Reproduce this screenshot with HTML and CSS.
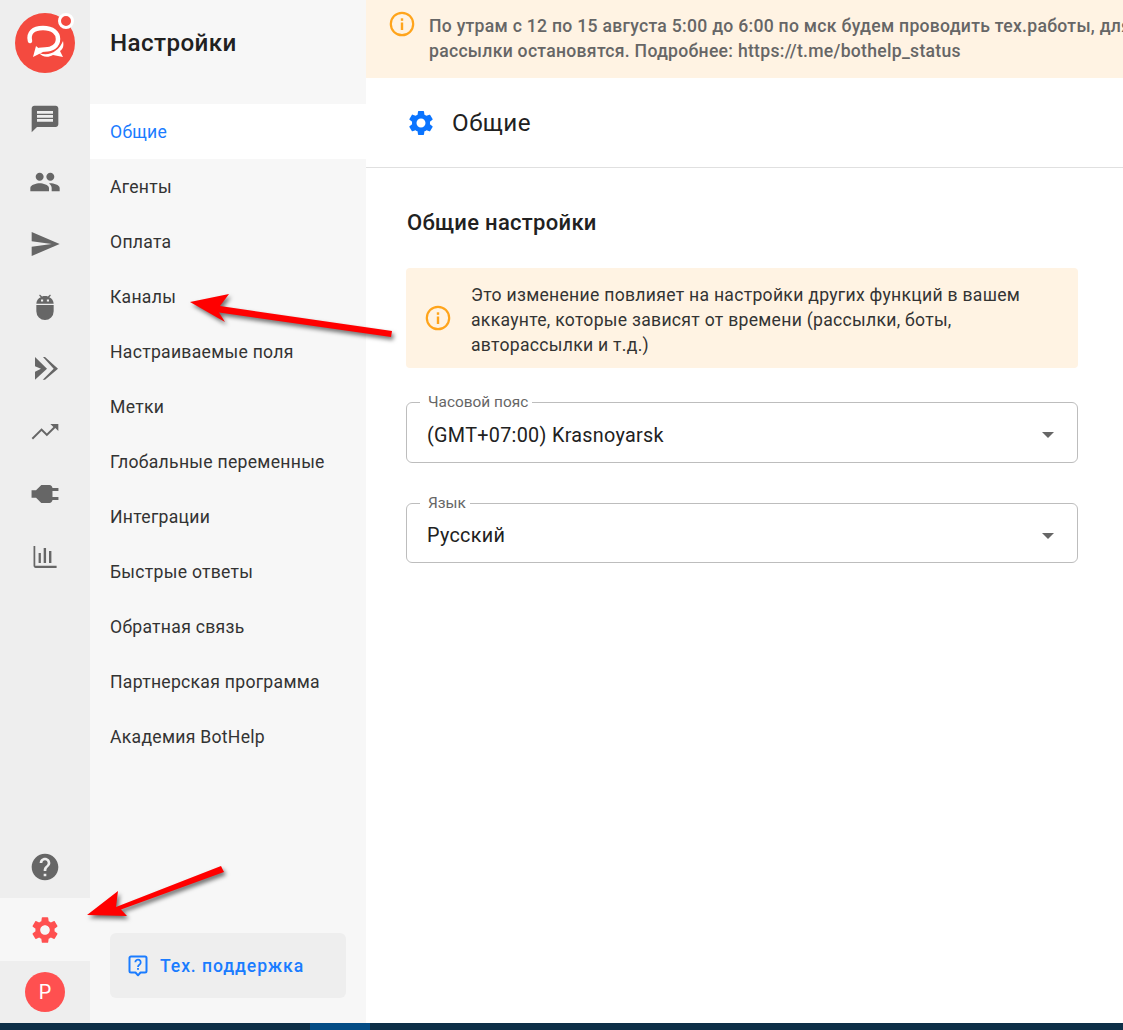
FILE: index.html
```html
<!DOCTYPE html>
<html lang="ru">
<head>
<meta charset="utf-8">
<title>Настройки</title>
<link rel="stylesheet" href="styles.css">
</head>
<body>
<div class="app">
  <nav class="rail">
    <div class="rail-top">
      <div class="logo">
        <svg viewBox="0 0 60 60" width="60" height="60">
          <circle cx="30" cy="30" r="30" fill="#f44a3f"/>
          <path d="M15 28C13 20 18 15 28 15C38 15 43 20 43 26C43 33 37 36.500 30 36.500L24 37" fill="none" stroke="#fff" stroke-width="4.500" stroke-linecap="round"/>
          <path d="M18 44L21 33 28 39z" fill="#fff"/>
          <path d="M24 40C34 44 44 38 48 28C49 33 48 36 45 38L48 44 38 42C33 45 27 44 24 40z" fill="#fff"/>
          <circle cx="51" cy="8" r="6.500" fill="#f44a3f" stroke="#fff" stroke-width="3"/>
        </svg>
      </div>
      <a class="rail-item"><svg class="ico" viewBox="0 0 24 24"><path d="M20 2H4c-1.100 0-1.990.9-1.990 2L2 22l4-4h14c1.100 0 2-.9 2-2V4c0-1.100-.9-2-2-2zM18 14H6v-2h12v2zm0-3H6V9h12v2zm0-3H6V6h12v2z"/></svg></a>
      <a class="rail-item"><svg class="ico" viewBox="0 0 24 24"><path d="M16 11c1.660 0 2.990-1.340 2.990-3S17.660 5 16 5c-1.660 0-3 1.340-3 3s1.340 3 3 3zm-8 0c1.660 0 2.990-1.340 2.990-3S9.660 5 8 5C6.340 5 5 6.340 5 8s1.340 3 3 3zm0 2c-2.330 0-7 1.170-7 3.500V19h14v-2.500c0-2.330-4.670-3.500-7-3.500zm8 0c-.29 0-.62.02-.97.05 1.160.84 1.970 1.970 1.970 3.450V19h6v-2.500c0-2.330-4.670-3.500-7-3.500z"/></svg></a>
      <a class="rail-item"><svg class="ico" viewBox="0 0 24 24"><path d="M2.010 21L23 12 2.010 3 2 10l15 2-15 2z"/></svg></a>
      <a class="rail-item"><svg class="ico" viewBox="0 0 24 24"><path fill-rule="evenodd" d="M5.500 10.500h13v4.700a6.500 6.500 0 0 1-13 0zM5.500 9.500c0-2.200 1.400-4 3.300-4.900L7.600 3.300l.6-.6 1.600 1.500c.7-.3 1.400-.4 2.200-.4s1.500.1 2.200.4l1.600-1.500.6.6-1.200 1.300c1.900.9 3.300 2.700 3.300 4.900zM9 6.300h1.600v1.600H9zm4.400 0H15v1.600h-1.600z"/></svg></a>
      <a class="rail-item"><svg class="ico" viewBox="0 0 24 24"><path d="M4.500 3L13.500 11.800 4.500 20V14L9 11.800 4.500 10zM10.500 3h1.500L21.750 11.800 12 20h-1.700L18.500 11.800z"/></svg></a>
      <a class="rail-item"><svg class="ico" viewBox="0 0 24 24"><path d="M16 6l2.290 2.290-4.880 4.880-4-4L2 16.590 3 17.600l6.400-6.400 4 4 6.300-6.290L22 11.200V6z"/></svg></a>
      <a class="rail-item"><svg class="ico" viewBox="0 0 24 24"><path transform="rotate(90 12 12) translate(12 12) scale(1.120) translate(-12 -12)" d="M16 7V3h-2v4h-4V3H8v4h-.01C7 6.990 6 7.990 6 8.990v5.490L9.500 18v3h5v-3l3.500-3.510v-5.500c0-1-1-2-2-1.990z"/></svg></a>
      <a class="rail-item"><svg class="ico" viewBox="0 0 24 24"><path d="M3.400 3.750h1.300V18.600H20.700v1.650H5c-.9 0-1.600-.7-1.600-1.600zM7.200 9h1.700v7.500H7.200zM11 5.250h1.800V16.500H11zM15 7.500H16.800V16.500H15z"/></svg></a>
    </div>
    <div class="rail-bottom">
      <a class="rail-item rail-help"><svg class="ico" viewBox="0 0 24 24"><path d="M12 2C6.480 2 2 6.480 2 12s4.480 10 10 10 10-4.480 10-10S17.520 2 12 2zm1 17h-2v-2h2v2zm2.070-7.750l-.9.920C13.450 12.900 13 13.500 13 15h-2v-.5c0-1.100.45-2.100 1.170-2.830l1.240-1.260c.37-.36.59-.86.59-1.410 0-1.100-.9-2-2-2s-2 .9-2 2H8c0-2.210 1.790-4 4-4s4 1.790 4 4c0 .88-.36 1.680-.93 2.250z"/></svg></a>
      <a class="rail-item rail-active"><svg class="ico ico-red" viewBox="0 0 24 24"><path d="M19.140 12.940c.04-.3.06-.61.06-.94 0-.32-.02-.64-.07-.94l2.030-1.580c.18-.14.23-.41.12-.61l-1.920-3.320c-.12-.22-.37-.29-.59-.22l-2.390.96c-.5-.38-1.030-.7-1.620-.94l-.36-2.540c-.04-.24-.24-.41-.48-.41h-3.840c-.24 0-.43.17-.47.41l-.36 2.540c-.59.24-1.130.57-1.620.94l-2.390-.96c-.22-.08-.47 0-.59.22L2.740 8.870c-.12.21-.08.47.12.61l2.030 1.580c-.05.3-.09.63-.09.94s.02.64.07.94l-2.030 1.580c-.18.14-.23.41-.12.61l1.920 3.320c.12.22.37.29.59.22l2.390-.96c.5.38 1.030.7 1.620.94l.36 2.540c.05.24.24.41.48.41h3.840c.24 0 .44-.17.47-.41l.36-2.540c.59-.24 1.130-.56 1.620-.94l2.390.96c.22.08.47 0 .59-.22l1.920-3.320c.12-.22.07-.47-.12-.61l-2.010-1.580zM12 15.600c-1.980 0-3.600-1.620-3.600-3.600s1.620-3.600 3.600-3.600 3.600 1.620 3.600 3.600-1.620 3.600-3.600 3.600z"/></svg></a>
      <div class="avatar-row"><span class="avatar">P</span></div>
    </div>
  </nav>

  <aside class="sidebar">
    <h1 class="side-title">Настройки</h1>
    <ul class="side-menu">
      <li class="side-item side-item-active">Общие</li>
      <li class="side-item">Агенты</li>
      <li class="side-item">Оплата</li>
      <li class="side-item">Каналы</li>
      <li class="side-item">Настраиваемые поля</li>
      <li class="side-item">Метки</li>
      <li class="side-item">Глобальные переменные</li>
      <li class="side-item">Интеграции</li>
      <li class="side-item">Быстрые ответы</li>
      <li class="side-item">Обратная связь</li>
      <li class="side-item">Партнерская программа</li>
      <li class="side-item">Академия BotHelp</li>
    </ul>
    <a class="support">
      <svg class="support-ico" viewBox="0 0 20 22"><path d="M3 1.500h14a1.500 1.500 0 0 1 1.500 1.500v13a1.500 1.500 0 0 1-1.500 1.500h-4.500L10 20.300 7.500 17.500H3A1.500 1.500 0 0 1 1.500 16V3A1.500 1.500 0 0 1 3 1.500z" fill="none" stroke="#1a7cff" stroke-width="2" stroke-linejoin="round"/><path d="M7.300 7.300a2.700 2.700 0 1 1 4.300 2.200c-1 .7-1.600 1.200-1.600 2.500" fill="none" stroke="#1a7cff" stroke-width="1.800"/><rect x="9.100" y="13" width="1.800" height="1.800" fill="#1a7cff"/></svg>
      <span>Тех. поддержка</span>
    </a>
  </aside>

  <main class="main">
    <div class="banner">
      <svg class="info" viewBox="0 0 26 26"><circle cx="13" cy="13" r="11.200" fill="none" stroke="#ffa41b" stroke-width="2.200"/><rect x="11.800" y="11.500" width="2.400" height="7.500" fill="#ffa41b"/><rect x="11.800" y="7.300" width="2.400" height="2.500" fill="#ffa41b"/></svg>
      <p class="banner-text">По утрам с 12 по 15 августа 5:00 до 6:00 по мск будем проводить тех.работы, для<br>рассылки остановятся. Подробнее: https://t.me/bothelp_status</p>
    </div>
    <header class="page-head">
      <svg class="head-ico" viewBox="0 0 24 24"><path d="M19.140 12.940c.04-.3.06-.61.06-.94 0-.32-.02-.64-.07-.94l2.030-1.580c.18-.14.23-.41.12-.61l-1.920-3.320c-.12-.22-.37-.29-.59-.22l-2.390.96c-.5-.38-1.030-.7-1.620-.94l-.36-2.540c-.04-.24-.24-.41-.48-.41h-3.840c-.24 0-.43.17-.47.41l-.36 2.540c-.59.24-1.130.57-1.620.94l-2.390-.96c-.22-.08-.47 0-.59.22L2.740 8.870c-.12.21-.08.47.12.61l2.030 1.580c-.05.3-.09.63-.09.94s.02.64.07.94l-2.030 1.580c-.18.14-.23.41-.12.61l1.920 3.320c.12.22.37.29.59.22l2.390-.96c.5.38 1.030.7 1.620.94l.36 2.540c.05.24.24.41.48.41h3.840c.24 0 .44-.17.47-.41l.36-2.540c.59-.24 1.130-.56 1.620-.94l2.390.96c.22.08.47 0 .59-.22l1.920-3.320c.12-.22.07-.47-.12-.61l-2.010-1.580zM12 15.600c-1.980 0-3.600-1.620-3.600-3.600s1.620-3.600 3.600-3.600 3.600 1.620 3.600 3.600-1.620 3.600-3.600 3.600z"/></svg>
      <h2 class="page-title">Общие</h2>
    </header>
    <section class="content">
      <h3 class="section-title">Общие настройки</h3>
      <div class="alert">
        <svg class="info" viewBox="0 0 26 26"><circle cx="13" cy="13" r="11.200" fill="none" stroke="#ffa41b" stroke-width="2.200"/><rect x="11.800" y="11.500" width="2.400" height="7.500" fill="#ffa41b"/><rect x="11.800" y="7.300" width="2.400" height="2.500" fill="#ffa41b"/></svg>
        <p class="alert-text">Это изменение повлияет на настройки других функций в вашем аккаунте, которые зависят от времени (рассылки, боты, авторассылки и т.д.)</p>
      </div>
      <fieldset class="select select-first">
        <legend class="select-label">Часовой пояс</legend>
        <span class="select-value">(GMT+07:00) Krasnoyarsk</span>
        <span class="caret"></span>
      </fieldset>
      <fieldset class="select select-second">
        <legend class="select-label">Язык</legend>
        <span class="select-value">Русский</span>
        <span class="caret"></span>
      </fieldset>
    </section>
  </main>
</div>
<div class="taskbar"><span class="taskbar-seg"></span></div>
<svg class="arrows" viewBox="0 0 1123 1030" width="1123" height="1030">
  <path d="M190 302L229 294 220 306 392 331 391 337 219 312.500 225 322z" fill="#f00"/>
  <path d="M87 915L118 891 116 907 221 866 224 872 121 909.500 127 916z" fill="#f00"/>
</svg>
</body>
</html>
```

FILE: styles.css
```css
* { box-sizing: border-box; }
html, body { margin: 0; padding: 0; height: 100%; overflow: hidden; }
body {
  position: relative;
  width: 1123px;
  height: 1030px;
  font-family: Roboto, "Noto Sans", sans-serif;
  color: #212121;
  background: #fff;
}
.app { display: flex; height: 1023px; }

/* rail */
.rail {
  width: 90px;
  flex: none;
  background: #eee;
  display: flex;
  flex-direction: column;
  justify-content: space-between;
}
.logo { display: flex; justify-content: center; padding-top: 13px; height: 88px; }
.rail-item { display: flex; align-items: center; justify-content: center; height: 62.500px; }
.ico { width: 32px; height: 32px; fill: #666; }
.ico-red { fill: #ff5050; }
.rail-active { background: #f7f7f7; height: 63px; }
.rail-help { height: 62px; }
.avatar-row { display: flex; justify-content: center; align-items: center; height: 62px; }
.avatar {
  width: 40px; height: 40px; border-radius: 50%;
  background: #ff5050; color: #fff;
  display: flex; align-items: center; justify-content: center;
  font-size: 19.800px;
}

/* sidebar */
.sidebar {
  width: 276px;
  flex: none;
  background: #f7f7f7;
  display: flex;
  flex-direction: column;
  padding-top: 28px;
}
.side-title { margin: 0 0 46px 20px; font-size: 24.200px; line-height: 30px; font-weight: 500; letter-spacing: .4px; }
.side-menu { list-style: none; margin: 0; padding: 0; flex: 1; }
.side-item {
  height: 55px;
  padding: 1px 0 0 20px;
  display: flex;
  align-items: center;
  font-size: 17.600px;
  letter-spacing: .28px;
  color: #333;
}
.side-item-active { background: #fff; color: #1a7cff; }
.support {
  margin: 0 20px 25px;
  height: 65px;
  background: #eee;
  border-radius: 6px;
  display: flex;
  align-items: center;
  gap: 12px;
  padding-left: 18px;
  color: #1a7cff;
  font-size: 17.600px;
  font-weight: 500;
  letter-spacing: .9px;
}
.support-ico { width: 20px; height: 22px; flex: none; }

/* main */
.main { flex: 1; min-width: 0; overflow: hidden; background: #fff; }
.banner {
  height: 78px;
  background: #fff3e3;
  display: flex;
  align-items: flex-start;
  gap: 14px;
  padding: 11px 0 0 23px;
}
.info { width: 26px; height: 26px; flex: none; }
.banner-text {
  margin: 0;
  padding-top: 3px;
  font-size: 17.600px;
  line-height: 25px;
  font-weight: 500;
  letter-spacing: .28px;
  color: #666;
  white-space: nowrap;
}
.page-head {
  height: 90px;
  border-bottom: 1px solid #e0e0e0;
  display: flex;
  align-items: center;
  gap: 16px;
  padding-left: 40px;
}
.head-ico { width: 30px; height: 30px; fill: #0a74ff; flex: none; }
.page-title { margin: 0; font-size: 24.200px; font-weight: 400; letter-spacing: .5px; }
.content { padding: 40px 45px 0 40px; }
.section-title { margin: 0 0 30px 1px; font-size: 22px; line-height: 30px; font-weight: 500; letter-spacing: .3px; }
.alert {
  height: 100px;
  background: #fff3e3;
  border-radius: 4px;
  display: flex;
  align-items: center;
  gap: 20px;
  padding: 0 50px 0 19px;
}
.alert-text { margin: 0; padding-top: 4px; font-size: 17.600px; line-height: 25px; letter-spacing: .28px; color: #333; }

.select {
  position: relative;
  margin: 26px 0 0;
  padding: 0 20px 3px;
  height: 68px;
  border: 1px solid #bdbdbd;
  border-radius: 6px;
  display: flex;
  align-items: center;
  min-width: 0;
}
.select-first { height: 69px; padding-bottom: 2px; }
.select-second { margin-top: 32px; }
.select-label {
  margin-left: -7px;
  padding: 0 4px 0 8px;
  font-size: 15.400px;
  line-height: 16px;
  color: #666;
}
.select-value { font-size: 19.800px; letter-spacing: .3px; color: #212121; }
.caret {
  position: absolute;
  right: 23px;
  top: 50%;
  margin-top: -4px;
  width: 0; height: 0;
  border-left: 6px solid transparent;
  border-right: 6px solid transparent;
  border-top: 6px solid #666;
}

/* screen edge */
.taskbar { height: 7px; background: #0d2f47; display: flex; padding-left: 310px; }
.taskbar-seg { width: 60px; background: #034c85; }

/* annotation overlay */
.arrows {
  position: absolute;
  left: 0; top: 0;
  pointer-events: none;
  filter: drop-shadow(2px 3px 2px rgba(0,0,0,.55));
}
```
